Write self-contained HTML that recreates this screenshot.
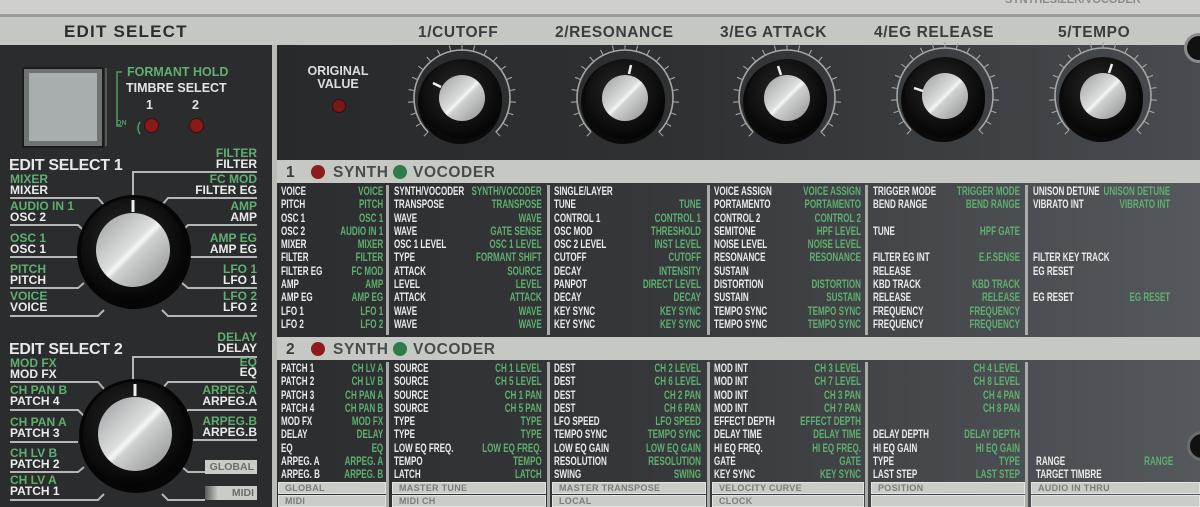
<!DOCTYPE html>
<html><head><meta charset="utf-8"><style>
*{margin:0;padding:0;box-sizing:border-box}
body{width:1200px;height:507px;overflow:hidden;background:#c4c7c2;font-family:"Liberation Sans",sans-serif;font-weight:bold;position:relative}
.a{position:absolute}
.hdr{color:#3b3d3d;font-size:15.5px;letter-spacing:.6px;white-space:nowrap;font-weight:900}
.col{position:absolute;transform-origin:0 0;transform:scaleX(.7)}
.row{display:flex;justify-content:space-between;font-size:11.5px;line-height:13.3px;height:13.3px;white-space:nowrap}
.row span:first-child{color:#ececec}
.row span:last-child{color:#5fb06e}
.g2 .row{line-height:13.25px;height:13.25px}
.sep{position:absolute;width:3px;background:#a9aca8}
.box{position:absolute;background:#c9ccc7;border:1px solid #e2e4e0;color:#7a7c7a;font-size:9px;line-height:11px;padding-left:6px;letter-spacing:.3px;height:12px}
.gl{color:#5fb06e}.wh{color:#ececec}
.lbl{position:absolute;font-size:12px;line-height:11px;white-space:nowrap;transform-origin:0 0}
.r{text-align:right}
</style></head><body>
<div class="a" style="left:0;top:0;width:1200px;height:14px;background:#cfcfcb"></div>
<div class="a" style="left:0;top:14px;width:1200px;height:3px;background:#9c9d99"></div>
<div class="a" style="left:1005px;top:-6px;font-size:11px;color:#8a8b88">SYNTHESIZER/VOCODER</div>
<div class="a hdr" style="left:64px;top:22px;font-size:17px;letter-spacing:1.2px;color:#2c2e2e">EDIT SELECT</div>
<div class="a hdr" style="left:418px;top:24px">1/CUTOFF</div>
<div class="a hdr" style="left:555px;top:24px">2/RESONANCE</div>
<div class="a hdr" style="left:720px;top:24px">3/EG ATTACK</div>
<div class="a hdr" style="left:874px;top:24px">4/EG RELEASE</div>
<div class="a hdr" style="left:1058px;top:24px">5/TEMPO</div>

<div class="a" style="left:0;top:45px;width:272px;height:462px;background:#2b2c2e"></div>
<div class="a" style="left:272px;top:45px;width:5px;height:462px;background:#b9bcb7"></div>
<div class="a" style="left:277px;top:45px;width:923px;height:115px;background:linear-gradient(90deg,#28292b 0%,#2f3133 45%,#484b50 100%)"></div>
<div class="a" style="left:277px;top:160px;width:923px;height:23px;background:#c5c8c3"></div>
<div class="a" style="left:277px;top:183px;width:923px;height:154px;background:linear-gradient(90deg,#2c2d2f 0%,#35373a 40%,#55585d 100%)"></div>
<div class="a" style="left:277px;top:337px;width:923px;height:23px;background:#c5c8c3"></div>
<div class="a" style="left:277px;top:360px;width:923px;height:147px;background:linear-gradient(90deg,#2c2d2f 0%,#35373a 40%,#55585d 100%)"></div>

<div class="a" style="left:22px;top:67px;width:82px;height:81px;background:#6f7473;border:2px solid #1b1c1c;border-radius:2px"></div>
<div class="a" style="left:29px;top:73px;width:68px;height:68px;background:#a8adae"></div>
<div class="a" style="left:105px;top:68px;width:2px;height:78px;background:#565858"></div>

<div class="a" style="left:127px;top:65px;font-size:12.5px;color:#5fb06e">FORMANT HOLD</div>
<div class="a" style="left:126px;top:81px;font-size:12.5px;color:#e4e4e4">TIMBRE SELECT</div>
<div class="a" style="left:146px;top:98px;font-size:12.5px;color:#e4e4e4">1</div>
<div class="a" style="left:192px;top:98px;font-size:12.5px;color:#e4e4e4">2</div>
<svg class="a" style="left:110px;top:68px" width="40" height="70"><path d="M12 4H7V58H12" fill="none" stroke="#4f9c5e" stroke-width="1.5"/><text x="6" y="57" font-size="7" fill="#4f9c5e" font-family="Liberation Sans" font-weight="bold">ON</text><path d="M30 66Q26 60 30 54" fill="none" stroke="#4f9c5e" stroke-width="1.5"/></svg>
<div class="a" style="left:145px;top:119px;width:13px;height:13px;border-radius:50%;background:#8a1a1a;box-shadow:0 0 0 1px #3a0d0d"></div>
<div class="a" style="left:190px;top:119px;width:13px;height:13px;border-radius:50%;background:#8a1a1a;box-shadow:0 0 0 1px #3a0d0d"></div>

<div class="a" style="left:302px;top:65px;font-size:12.5px;line-height:13px;color:#dedede;text-align:center;width:72px">ORIGINAL<br>VALUE</div>
<div class="a" style="left:333px;top:100px;width:12px;height:12px;border-radius:50%;background:#7a1818;box-shadow:0 0 0 1px #3a0d0d"></div>

<svg width="0" height="0" style="position:absolute">
<defs>
<linearGradient id="sv" x1="0" y1="0" x2="1" y2="1"><stop offset="0" stop-color="#9a9c9d"/><stop offset=".45" stop-color="#dcdddd"/><stop offset=".5" stop-color="#f6f6f6"/><stop offset=".55" stop-color="#cfd0d0"/><stop offset="1" stop-color="#8c8e8f"/></linearGradient>
<radialGradient id="bk" cx=".45" cy=".4" r=".6"><stop offset="0" stop-color="#2a2a2a"/><stop offset=".8" stop-color="#0c0c0c"/><stop offset="1" stop-color="#050505"/></radialGradient>
<symbol id="knob" viewBox="0 0 120 120">
<circle cx="60" cy="60" r="48" fill="none" stroke="#a5a7a6" stroke-width="1.6" stroke-dasharray="226 76" transform="rotate(135 60 60)"/>
<circle cx="60" cy="60" r="51" fill="none" stroke="#a5a7a6" stroke-width="6" pathLength="360" stroke-dasharray="1.2 12.3 1.2 12.3 1.2 12.3 1.2 12.3 1.2 12.3 1.2 12.3 1.2 12.3 1.2 12.3 1.2 12.3 1.2 12.3 1.2 12.3 1.2 12.3 1.2 12.3 1.2 12.3 1.2 12.3 1.2 12.3 1.2 12.3 1.2 12.3 1.2 12.3 1.2 12.3 1.2 100" transform="rotate(134.4 60 60)"/>
<circle cx="58" cy="64" r="42" fill="#0a0a0a"/>
<circle cx="60" cy="61" r="40" fill="url(#bk)"/>
<circle cx="60" cy="60" r="23" fill="url(#sv)"/>
</symbol>
</defs></svg>
<svg class="a" style="left:402px;top:38px" width="120" height="120"><use href="#knob"/><line x1="39" y1="49" x2="31" y2="45" stroke="#eee" stroke-width="2.5"/></svg>
<svg class="a" style="left:565px;top:38px" width="120" height="120"><use href="#knob"/><line x1="64" y1="36" x2="66" y2="27" stroke="#eee" stroke-width="2.5"/></svg>
<svg class="a" style="left:727px;top:38px" width="120" height="120"><use href="#knob"/><line x1="54" y1="37" x2="51" y2="28" stroke="#eee" stroke-width="2.5"/></svg>
<svg class="a" style="left:885px;top:36px" width="120" height="120"><use href="#knob"/><line x1="38" y1="55" x2="29" y2="52" stroke="#eee" stroke-width="2.5"/></svg>
<svg class="a" style="left:1043px;top:36px" width="120" height="120"><use href="#knob"/><line x1="66" y1="37" x2="69" y2="28" stroke="#eee" stroke-width="2.5"/></svg>
<div class="a" style="left:1184px;top:33px;width:30px;height:30px;border-radius:50%;background:#111;border:3px solid #8a8c8c"></div>
<div class="a" style="left:1187px;top:431px;width:30px;height:30px;border-radius:50%;background:#111;border:3px solid #6a6c6c"></div>

<div class="a hdr" style="left:286px;top:164px">1</div>
<div class="a" style="left:311px;top:165px;width:14px;height:14px;border-radius:50%;background:#8e1c1c"></div>
<div class="a hdr" style="left:333px;top:164px;color:#4a4c4c">SYNTH</div>
<div class="a" style="left:393px;top:165px;width:14px;height:14px;border-radius:50%;background:#2f7b4a"></div>
<div class="a hdr" style="left:413px;top:164px;color:#4a4c4c">VOCODER</div>
<div class="a hdr" style="left:286px;top:341px">2</div>
<div class="a" style="left:311px;top:342px;width:14px;height:14px;border-radius:50%;background:#8e1c1c"></div>
<div class="a hdr" style="left:333px;top:341px;color:#4a4c4c">SYNTH</div>
<div class="a" style="left:393px;top:342px;width:14px;height:14px;border-radius:50%;background:#2f7b4a"></div>
<div class="a hdr" style="left:413px;top:341px;color:#4a4c4c">VOCODER</div>

<div class="sep" style="left:386px;top:185px;height:150px"></div>
<div class="sep" style="left:547px;top:185px;height:150px"></div>
<div class="sep" style="left:707px;top:185px;height:150px"></div>
<div class="sep" style="left:865px;top:185px;height:150px"></div>
<div class="sep" style="left:1025px;top:185px;height:150px"></div>
<div class="sep" style="left:386px;top:362px;height:145px"></div>
<div class="sep" style="left:547px;top:362px;height:145px"></div>
<div class="sep" style="left:707px;top:362px;height:145px"></div>
<div class="sep" style="left:865px;top:362px;height:145px"></div>
<div class="sep" style="left:1025px;top:362px;height:145px"></div>

<div class="col" style="left:281px;top:186px;width:146px">
<div class="row"><span>VOICE</span><span>VOICE</span></div><div class="row"><span>PITCH</span><span>PITCH</span></div><div class="row"><span>OSC 1</span><span>OSC 1</span></div><div class="row"><span>OSC 2</span><span>AUDIO IN 1</span></div><div class="row"><span>MIXER</span><span>MIXER</span></div><div class="row"><span>FILTER</span><span>FILTER</span></div><div class="row"><span>FILTER EG</span><span>FC MOD</span></div><div class="row"><span>AMP</span><span>AMP</span></div><div class="row"><span>AMP EG</span><span>AMP EG</span></div><div class="row"><span>LFO 1</span><span>LFO 1</span></div><div class="row"><span>LFO 2</span><span>LFO 2</span></div></div>
<div class="col" style="left:394px;top:186px;width:211px">
<div class="row"><span>SYNTH/VOCODER</span><span>SYNTH/VOCODER</span></div><div class="row"><span>TRANSPOSE</span><span>TRANSPOSE</span></div><div class="row"><span>WAVE</span><span>WAVE</span></div><div class="row"><span>WAVE</span><span>GATE SENSE</span></div><div class="row"><span>OSC 1 LEVEL</span><span>OSC 1 LEVEL</span></div><div class="row"><span>TYPE</span><span>FORMANT SHIFT</span></div><div class="row"><span>ATTACK</span><span>SOURCE</span></div><div class="row"><span>LEVEL</span><span>LEVEL</span></div><div class="row"><span>ATTACK</span><span>ATTACK</span></div><div class="row"><span>WAVE</span><span>WAVE</span></div><div class="row"><span>WAVE</span><span>WAVE</span></div></div>
<div class="col" style="left:554px;top:186px;width:210px">
<div class="row"><span>SINGLE/LAYER</span><span></span></div><div class="row"><span>TUNE</span><span>TUNE</span></div><div class="row"><span>CONTROL 1</span><span>CONTROL 1</span></div><div class="row"><span>OSC MOD</span><span>THRESHOLD</span></div><div class="row"><span>OSC 2 LEVEL</span><span>INST LEVEL</span></div><div class="row"><span>CUTOFF</span><span>CUTOFF</span></div><div class="row"><span>DECAY</span><span>INTENSITY</span></div><div class="row"><span>PANPOT</span><span>DIRECT LEVEL</span></div><div class="row"><span>DECAY</span><span>DECAY</span></div><div class="row"><span>KEY SYNC</span><span>KEY SYNC</span></div><div class="row"><span>KEY SYNC</span><span>KEY SYNC</span></div></div>
<div class="col" style="left:714px;top:186px;width:210px">
<div class="row"><span>VOICE ASSIGN</span><span>VOICE ASSIGN</span></div><div class="row"><span>PORTAMENTO</span><span>PORTAMENTO</span></div><div class="row"><span>CONTROL 2</span><span>CONTROL 2</span></div><div class="row"><span>SEMITONE</span><span>HPF LEVEL</span></div><div class="row"><span>NOISE LEVEL</span><span>NOISE LEVEL</span></div><div class="row"><span>RESONANCE</span><span>RESONANCE</span></div><div class="row"><span>SUSTAIN</span><span></span></div><div class="row"><span>DISTORTION</span><span>DISTORTION</span></div><div class="row"><span>SUSTAIN</span><span>SUSTAIN</span></div><div class="row"><span>TEMPO SYNC</span><span>TEMPO SYNC</span></div><div class="row"><span>TEMPO SYNC</span><span>TEMPO SYNC</span></div></div>
<div class="col" style="left:873px;top:186px;width:210px">
<div class="row"><span>TRIGGER MODE</span><span>TRIGGER MODE</span></div><div class="row"><span>BEND RANGE</span><span>BEND RANGE</span></div><div class="row"><span></span><span></span></div><div class="row"><span>TUNE</span><span>HPF GATE</span></div><div class="row"><span></span><span></span></div><div class="row"><span>FILTER EG INT</span><span>E.F.SENSE</span></div><div class="row"><span>RELEASE</span><span></span></div><div class="row"><span>KBD TRACK</span><span>KBD TRACK</span></div><div class="row"><span>RELEASE</span><span>RELEASE</span></div><div class="row"><span>FREQUENCY</span><span>FREQUENCY</span></div><div class="row"><span>FREQUENCY</span><span>FREQUENCY</span></div></div>
<div class="col" style="left:1033px;top:186px;width:196px">
<div class="row"><span>UNISON DETUNE</span><span>UNISON DETUNE</span></div><div class="row"><span>VIBRATO INT</span><span>VIBRATO INT</span></div><div class="row"></div><div class="row"></div><div class="row"></div><div class="row"><span>FILTER KEY TRACK</span><span></span></div><div class="row"><span>EG RESET</span><span></span></div><div class="row"></div><div class="row"><span>EG RESET</span><span>EG RESET</span></div></div>

<div class="col g2" style="left:281px;top:363px;width:146px">
<div class="row"><span>PATCH 1</span><span>CH LV A</span></div><div class="row"><span>PATCH 2</span><span>CH LV B</span></div><div class="row"><span>PATCH 3</span><span>CH PAN A</span></div><div class="row"><span>PATCH 4</span><span>CH PAN B</span></div><div class="row"><span>MOD FX</span><span>MOD FX</span></div><div class="row"><span>DELAY</span><span>DELAY</span></div><div class="row"><span>EQ</span><span>EQ</span></div><div class="row"><span>ARPEG. A</span><span>ARPEG. A</span></div><div class="row"><span>ARPEG. B</span><span>ARPEG. B</span></div></div>
<div class="col g2" style="left:394px;top:363px;width:211px">
<div class="row"><span>SOURCE</span><span>CH 1 LEVEL</span></div><div class="row"><span>SOURCE</span><span>CH 5 LEVEL</span></div><div class="row"><span>SOURCE</span><span>CH 1 PAN</span></div><div class="row"><span>SOURCE</span><span>CH 5 PAN</span></div><div class="row"><span>TYPE</span><span>TYPE</span></div><div class="row"><span>TYPE</span><span>TYPE</span></div><div class="row"><span>LOW EQ FREQ.</span><span>LOW EQ FREQ.</span></div><div class="row"><span>TEMPO</span><span>TEMPO</span></div><div class="row"><span>LATCH</span><span>LATCH</span></div></div>
<div class="col g2" style="left:554px;top:363px;width:210px">
<div class="row"><span>DEST</span><span>CH 2 LEVEL</span></div><div class="row"><span>DEST</span><span>CH 6 LEVEL</span></div><div class="row"><span>DEST</span><span>CH 2 PAN</span></div><div class="row"><span>DEST</span><span>CH 6 PAN</span></div><div class="row"><span>LFO SPEED</span><span>LFO SPEED</span></div><div class="row"><span>TEMPO SYNC</span><span>TEMPO SYNC</span></div><div class="row"><span>LOW EQ GAIN</span><span>LOW EQ GAIN</span></div><div class="row"><span>RESOLUTION</span><span>RESOLUTION</span></div><div class="row"><span>SWING</span><span>SWING</span></div></div>
<div class="col g2" style="left:714px;top:363px;width:210px">
<div class="row"><span>MOD INT</span><span>CH 3 LEVEL</span></div><div class="row"><span>MOD INT</span><span>CH 7 LEVEL</span></div><div class="row"><span>MOD INT</span><span>CH 3 PAN</span></div><div class="row"><span>MOD INT</span><span>CH 7 PAN</span></div><div class="row"><span>EFFECT DEPTH</span><span>EFFECT DEPTH</span></div><div class="row"><span>DELAY TIME</span><span>DELAY TIME</span></div><div class="row"><span>HI EQ FREQ.</span><span>HI EQ FREQ.</span></div><div class="row"><span>GATE</span><span>GATE</span></div><div class="row"><span>KEY SYNC</span><span>KEY SYNC</span></div></div>
<div class="col g2" style="left:873px;top:363px;width:210px">
<div class="row"><span></span><span>CH 4 LEVEL</span></div><div class="row"><span></span><span>CH 8 LEVEL</span></div><div class="row"><span></span><span>CH 4 PAN</span></div><div class="row"><span></span><span>CH 8 PAN</span></div><div class="row"></div><div class="row"><span>DELAY DEPTH</span><span>DELAY DEPTH</span></div><div class="row"><span>HI EQ GAIN</span><span>HI EQ GAIN</span></div><div class="row"><span>TYPE</span><span>TYPE</span></div><div class="row"><span>LAST STEP</span><span>LAST STEP</span></div></div>
<div class="col g2" style="left:1036px;top:363px;width:196px">
<div class="row"></div><div class="row"></div><div class="row"></div><div class="row"></div><div class="row"></div><div class="row"></div><div class="row"></div><div class="row"><span>RANGE</span><span>RANGE</span></div><div class="row"><span>TARGET TIMBRE</span><span></span></div></div>

<div class="box" style="left:278px;top:482px;width:108px">GLOBAL</div>
<div class="box" style="left:278px;top:495px;width:108px">MIDI</div>
<div class="box" style="left:392px;top:482px;width:154px">MASTER TUNE</div>
<div class="box" style="left:392px;top:495px;width:154px">MIDI CH</div>
<div class="box" style="left:552px;top:482px;width:154px">MASTER TRANSPOSE</div>
<div class="box" style="left:552px;top:495px;width:154px">LOCAL</div>
<div class="box" style="left:712px;top:482px;width:152px">VELOCITY CURVE</div>
<div class="box" style="left:712px;top:495px;width:152px">CLOCK</div>
<div class="box" style="left:871px;top:482px;width:154px">POSITION</div>
<div class="box" style="left:871px;top:495px;width:154px"></div>
<div class="box" style="left:1031px;top:482px;width:169px">AUDIO IN THRU</div>
<div class="box" style="left:1031px;top:495px;width:169px"></div>

<svg class="a" style="left:0;top:0" width="272" height="507">
<g fill="none" stroke="#b5b7b6" stroke-width="2">
<path d="M10 198H98L104 205M10 225H78L84 231M10 257H78M10 288H78L84 283M10 316H98L104 310"/>
<path d="M257 198H168L162 205M257 225H188L182 231M257 257H188M257 288H188L182 283M257 316H168L162 310M257 172H133V200"/>
<path d="M10 382H98L104 389M10 410H78L84 416M10 442H78M10 472H78L84 467M10 500H98L104 494"/>
<path d="M257 382H168L162 389M257 410H188L182 416M257 440H188M205 472H188L182 467M205 500H168L162 494M257 357H133V385"/>
</g>
</svg>
<svg class="a" style="left:70px;top:188px" width="130" height="130"><circle cx="64" cy="64" r="57" fill="#060606"/><circle cx="63" cy="62" r="52" fill="url(#bk)"/><circle cx="63" cy="62" r="37" fill="url(#sv)"/><line x1="63" y1="12" x2="63" y2="24" stroke="#eee" stroke-width="3"/></svg>
<svg class="a" style="left:72px;top:372px" width="130" height="130"><circle cx="64" cy="64" r="57" fill="#060606"/><circle cx="63" cy="62" r="52" fill="url(#bk)"/><circle cx="63" cy="62" r="37" fill="url(#sv)"/><line x1="63" y1="12" x2="63" y2="24" stroke="#eee" stroke-width="3"/></svg>

<div class="a" style="left:9px;top:157px;font-size:16px;color:#e8e8e8;letter-spacing:-.3px">EDIT SELECT 1</div>
<div class="a" style="left:9px;top:341px;font-size:16px;color:#e8e8e8;letter-spacing:-.3px">EDIT SELECT 2</div>

<div class="lbl gl" style="left:10px;top:174px">MIXER</div><div class="lbl wh" style="left:10px;top:185px">MIXER</div>
<div class="lbl gl" style="left:10px;top:201px">AUDIO IN 1</div><div class="lbl wh" style="left:10px;top:212px">OSC 2</div>
<div class="lbl gl" style="left:10px;top:233px">OSC 1</div><div class="lbl wh" style="left:10px;top:244px">OSC 1</div>
<div class="lbl gl" style="left:10px;top:264px">PITCH</div><div class="lbl wh" style="left:10px;top:275px">PITCH</div>
<div class="lbl gl" style="left:10px;top:291px">VOICE</div><div class="lbl wh" style="left:10px;top:302px">VOICE</div>
<div class="lbl gl r" style="left:157px;width:100px;top:148px">FILTER</div><div class="lbl wh r" style="left:157px;width:100px;top:159px">FILTER</div>
<div class="lbl gl r" style="left:157px;width:100px;top:174px">FC MOD</div><div class="lbl wh r" style="left:157px;width:100px;top:185px">FILTER EG</div>
<div class="lbl gl r" style="left:157px;width:100px;top:201px">AMP</div><div class="lbl wh r" style="left:157px;width:100px;top:212px">AMP</div>
<div class="lbl gl r" style="left:157px;width:100px;top:233px">AMP EG</div><div class="lbl wh r" style="left:157px;width:100px;top:244px">AMP EG</div>
<div class="lbl gl r" style="left:157px;width:100px;top:264px">LFO 1</div><div class="lbl wh r" style="left:157px;width:100px;top:275px">LFO 1</div>
<div class="lbl gl r" style="left:157px;width:100px;top:291px">LFO 2</div><div class="lbl wh r" style="left:157px;width:100px;top:302px">LFO 2</div>
<div class="lbl gl" style="left:10px;top:358px">MOD FX</div><div class="lbl wh" style="left:10px;top:369px">MOD FX</div>
<div class="lbl gl" style="left:10px;top:385px">CH PAN B</div><div class="lbl wh" style="left:10px;top:396px">PATCH 4</div>
<div class="lbl gl" style="left:10px;top:417px">CH PAN A</div><div class="lbl wh" style="left:10px;top:428px">PATCH 3</div>
<div class="lbl gl" style="left:10px;top:448px">CH LV B</div><div class="lbl wh" style="left:10px;top:459px">PATCH 2</div>
<div class="lbl gl" style="left:10px;top:475px">CH LV A</div><div class="lbl wh" style="left:10px;top:486px">PATCH 1</div>
<div class="lbl gl r" style="left:157px;width:100px;top:332px">DELAY</div><div class="lbl wh r" style="left:157px;width:100px;top:343px">DELAY</div>
<div class="lbl gl r" style="left:157px;width:100px;top:357px">EQ</div><div class="lbl wh r" style="left:157px;width:100px;top:367px">EQ</div>
<div class="lbl gl r" style="left:157px;width:100px;top:385px">ARPEG.A</div><div class="lbl wh r" style="left:157px;width:100px;top:396px">ARPEG.A</div>
<div class="lbl gl r" style="left:157px;width:100px;top:416px">ARPEG.B</div><div class="lbl wh r" style="left:157px;width:100px;top:427px">ARPEG.B</div>
<div class="a" style="left:205px;top:460px;width:52px;height:14px;background:#c9ccc7;color:#6c6e6d;font-size:10.5px;line-height:14px;text-align:right;padding-right:3px">GLOBAL</div>
<div class="a" style="left:205px;top:486px;width:52px;height:14px;background:linear-gradient(90deg,#5a5c5c,#c9ccc7 25%);color:#6c6e6d;font-size:10.5px;line-height:14px;text-align:right;padding-right:3px">MIDI</div>
</body></html>
